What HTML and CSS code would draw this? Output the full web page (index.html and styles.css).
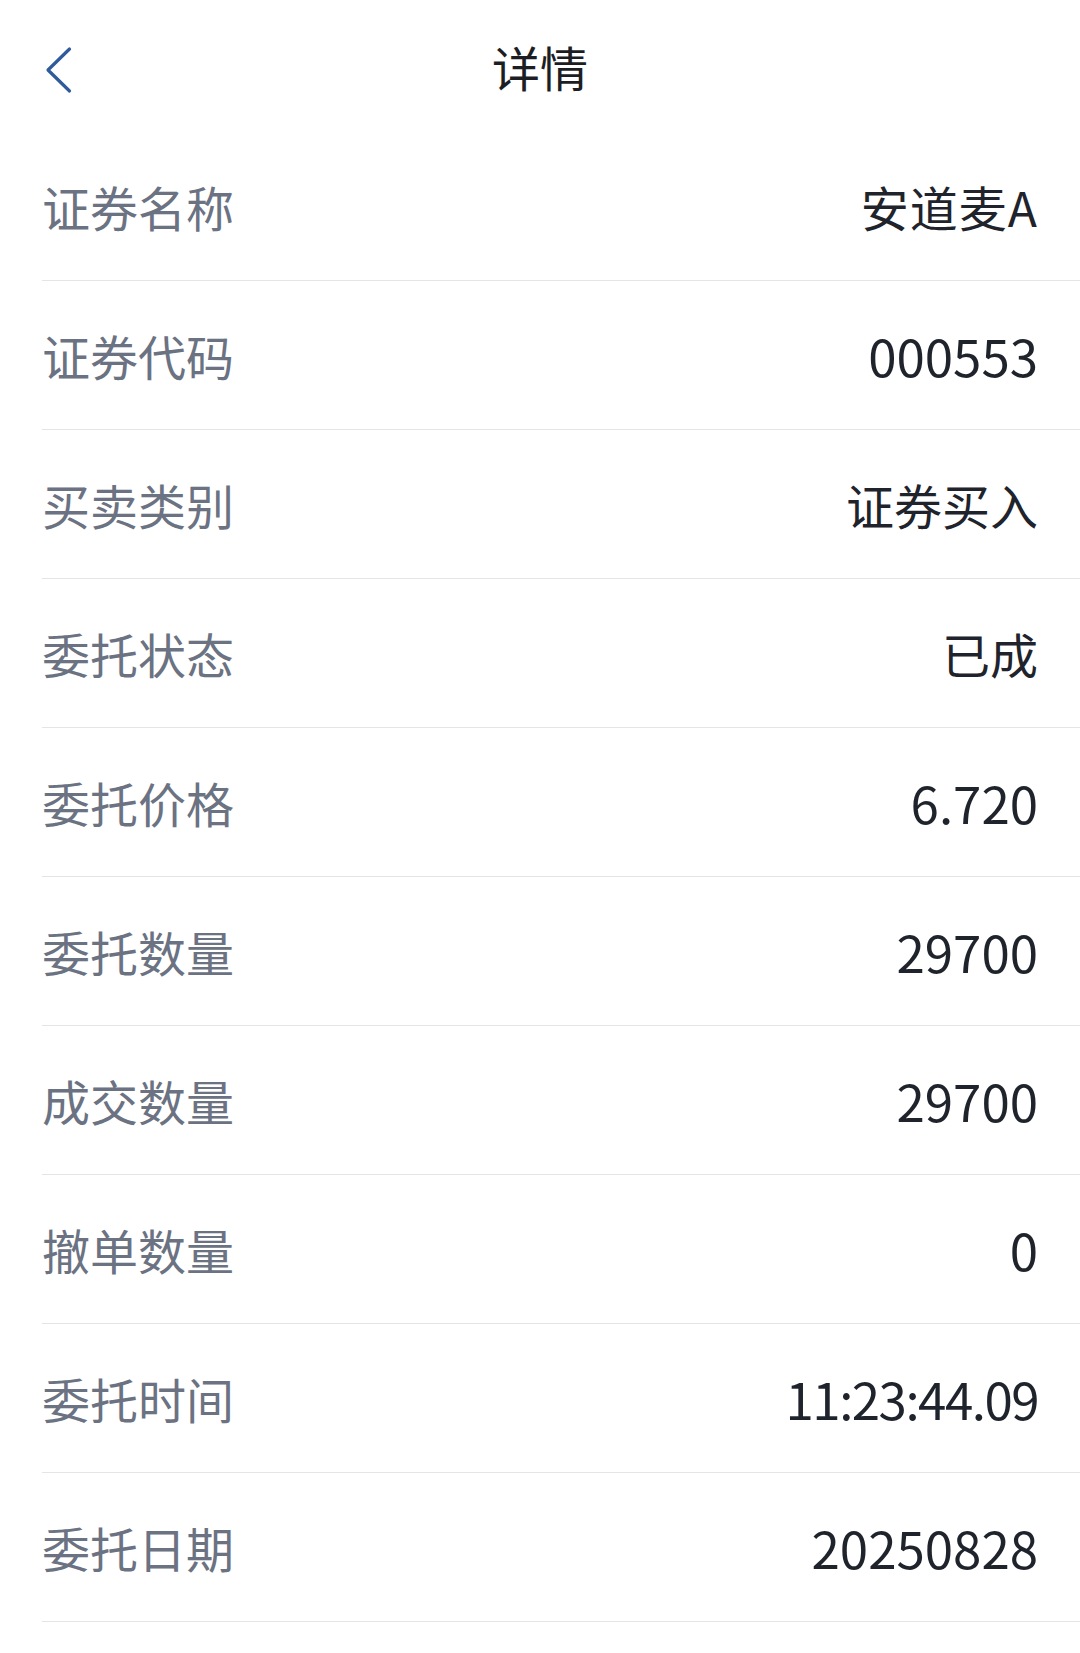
FILE: index.html
```html
<!DOCTYPE html>
<html lang="zh-CN">
<head>
<meta charset="utf-8">
<title>详情</title>
<link rel="stylesheet" href="styles.css">
</head>
<body>
<div class="page">
  <header class="nav">
    <button class="back" aria-label="返回">
      <svg width="30" height="50" viewBox="0 0 30 50"><path d="M25.5 4 L4 25 L25.5 46" fill="none" stroke="#2f5a9c" stroke-width="3.2" stroke-linecap="round" stroke-linejoin="round"/></svg>
    </button>
    <h1 class="title">详情</h1>
  </header>
  <ul class="list">
    <li class="row"><span class="label">证券名称</span><span class="value name">安道麦A</span></li>
    <li class="row"><span class="label">证券代码</span><span class="value num">000553</span></li>
    <li class="row"><span class="label">买卖类别</span><span class="value">证券买入</span></li>
    <li class="row"><span class="label">委托状态</span><span class="value">已成</span></li>
    <li class="row"><span class="label">委托价格</span><span class="value num">6.720</span></li>
    <li class="row"><span class="label">委托数量</span><span class="value num">29700</span></li>
    <li class="row"><span class="label">成交数量</span><span class="value num">29700</span></li>
    <li class="row"><span class="label">撤单数量</span><span class="value num">0</span></li>
    <li class="row"><span class="label">委托时间</span><span class="value num time">11:23:44.09</span></li>
    <li class="row"><span class="label">委托日期</span><span class="value num">20250828</span></li>
  </ul>
</div>
</body>
</html>
```
FILE: styles.css
```css
html, body {
  margin: 0;
  padding: 0;
  background: #ffffff;
}
body {
  font-family: "Noto Sans CJK SC", "Noto Sans", sans-serif;
  color: #1f232b;
}
.page {
  width: 1080px;
}
.nav {
  position: relative;
  height: 132px;
  display: flex;
  align-items: center;
  justify-content: center;
}
.back {
  position: absolute;
  left: 44px;
  top: 45px;
  padding: 0;
  margin: 0;
  border: 0;
  background: none;
  display: flex;
}
.title {
  margin: 0 0 0 0;
  font-size: 48px;
  font-weight: 400;
  line-height: 1;
  color: #1c1e24;
}
.list {
  list-style: none;
  margin: 0 0 0 42px;
  padding: 0;
}
.row {
  height: 148px;
  border-bottom: 1px solid #e4e5e8;
  display: flex;
  align-items: center;
  justify-content: space-between;
  padding-right: 42px;
}
.label {
  font-size: 48px;
  line-height: 1;
  color: #6b7282;
}
.value {
  font-size: 48px;
  line-height: 1;
  color: #1f232b;
}
.value.name {
  letter-spacing: 1px;
}
.value.num {
  font-size: 51px;
}
.value.time {
  letter-spacing: -1.5px;
}
```
